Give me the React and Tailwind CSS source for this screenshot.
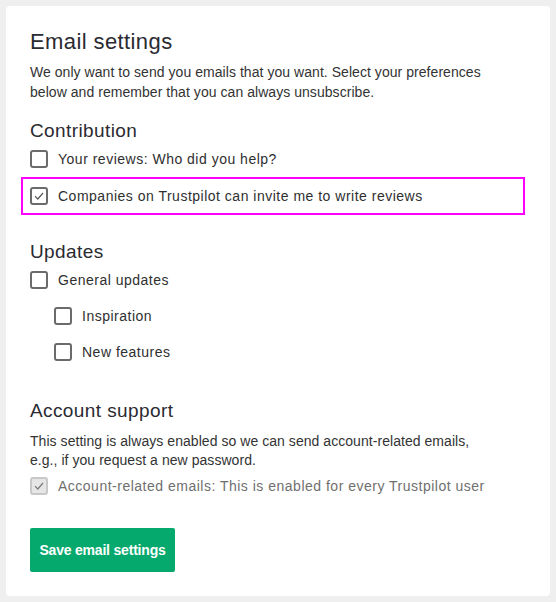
import React from 'react';

function Box({ checked, disabled }) {
  return (
    <span
      className={
        'flex h-[18px] w-[18px] shrink-0 items-center justify-center rounded-[3px] border-2 ' +
        (disabled ? 'border-[#c8c8c8] bg-[#e6e6e6]' : 'border-[#6b6b6b] bg-white')
      }
    >
      {checked && (
        <svg width="12" height="12" viewBox="0 0 12 12" fill="none">
          <path d="M2 6.2 L4.8 9 L10 3" stroke={disabled ? '#7a7a7a' : '#5a5a5a'} strokeWidth="1.2" />
        </svg>
      )}
    </span>
  );
}

function Row({ label, checked, disabled, className = '' }) {
  return (
    <label className={'flex items-center gap-[10px] ' + className}>
      <Box checked={checked} disabled={disabled} />
      <span className={'text-[14px] tracking-[0.5px] ' + (disabled ? 'text-[#6f6f6f]' : 'text-[#2f2f2f]')}>
        {label}
      </span>
    </label>
  );
}

export default function App() {
  return (
    <div className="min-h-[602px] bg-[#efefef] p-[6px] font-['Liberation_Sans',Arial,sans-serif]">
      <div className="rounded-[4px] bg-white p-6">
        <h1 className="text-[22px] leading-6 font-medium tracking-[0.4px] text-[#2a2a31]">Email settings</h1>
        <p className="mt-2 max-w-[466px] text-[14px] leading-5 tracking-[0.05px] text-[#333]">
          We only want to send you emails that you want. Select your preferences below and remember that you can always unsubscribe.
        </p>

        <h2 className="mt-[17px] text-[19px] leading-6 tracking-[0.4px] text-[#2a2a31]">Contribution</h2>
        <Row className="h-8" label="Your reviews: Who did you help?" />
        <div className="mt-[2px] -ml-[9px] flex h-[38px] w-[504px] items-center border-2 border-[#ff00ff] pl-[7px]">
          <Row checked label="Companies on Trustpilot can invite me to write reviews" />
        </div>

        <h2 className="mt-[27px] text-[19px] leading-5 tracking-[0.4px] text-[#2a2a31]">Updates</h2>
        <Row className="h-9" label="General updates" />
        <div className="pl-6">
          <Row className="h-9" label="Inspiration" />
          <Row className="h-9" label="New features" />
        </div>

        <h2 className="mt-[29px] text-[19px] leading-6 tracking-[0.4px] text-[#2a2a31]">Account support</h2>
        <p className="mt-[9px] max-w-[466px] text-[14px] leading-[19px] tracking-[0.05px] text-[#333]">
          This setting is always enabled so we can send account-related emails, e.g., if you request a new password.
        </p>
        <Row className="h-8" checked disabled label="Account-related emails: This is enabled for every Trustpilot user" />

        <button className="mt-[26px] h-11 w-[145px] rounded-[2px] bg-[#05a96d] text-[14px] font-bold tracking-[-0.2px] text-white">
          Save email settings
        </button>
      </div>
    </div>
  );
}
